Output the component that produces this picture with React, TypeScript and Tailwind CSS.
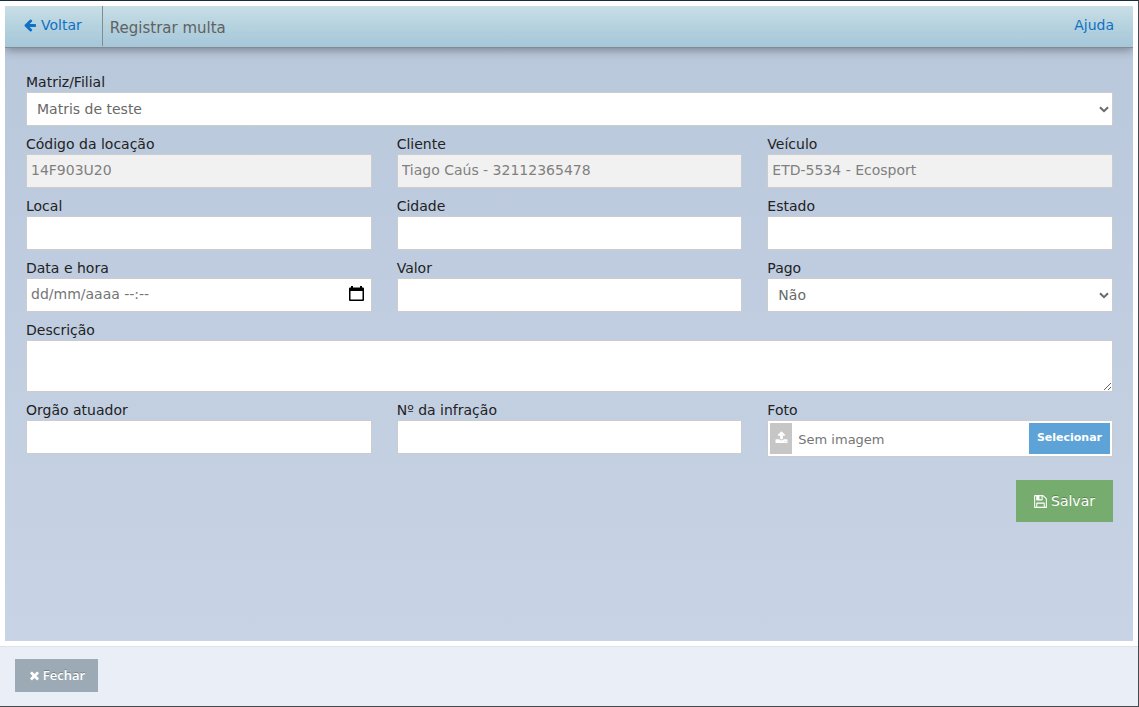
import { useRef, useState, type ReactNode } from 'react';

const control =
  'block h-[34px] w-full rounded-none border border-[#cccccc] bg-white px-1 pb-0.5 text-sm text-[#696969] placeholder:text-[#757575] outline-none focus:border-[#5ea3d8]';

function Icon({ path, className, viewBox = '0 0 1792 1792' }: { path: string; className: string; viewBox?: string }) {
  return (
    <svg viewBox={viewBox} fill="currentColor" aria-hidden="true" className={className}>
      <path d={path} />
    </svg>
  );
}

const arrowLeft =
  'M1664 896v128q0 53-32.5 90.5t-84.5 37.5h-704l293 294q38 36 38 90t-38 90l-75 76q-37 37-90 37-52 0-91-37l-651-652q-37-37-37-90 0-52 37-91l651-650q38-38 91-38 52 0 90 38l75 74q38 38 38 91t-38 91l-293 293h704q52 0 84.5 37.5t32.5 90.5z';
const times =
  'M1490 1322q0 40-28 68l-136 136q-28 28-68 28t-68-28l-294-294-294 294q-28 28-68 28t-68-28l-136-136q-28-28-28-68t28-68l294-294-294-294q-28-28-28-68t28-68l136-136q28-28 68-28t68 28l294 294 294-294q28-28 68-28t68 28l136 136q28 28 28 68t-28 68l-294 294 294 294q28 28 28 68z';
const upload =
  'M1344 1472q0-26-19-45t-45-19-45 19-19 45 19 45 45 19 45-19 19-45zm256 0q0-26-19-45t-45-19-45 19-19 45 19 45 45 19 45-19 19-45zm128-224v320q0 40-28 68t-68 28h-1472q-40 0-68-28t-28-68v-320q0-40 28-68t68-28h427q21 56 70.5 92t110.5 36h256q61 0 110.5-36t70.5-92h427q40 0 68 28t28 68zm-325-648q-17 40-59 40h-256v448q0 26-19 45t-45 19h-256q-26 0-45-19t-19-45v-448h-256q-42 0-59-40-17-39 14-69l448-448q18-19 45-19t45 19l448 448q31 30 14 69z';
const floppy =
  'M384 1536h768v-384h-768v384zm896 0h128v-896q0-14-10-38.5t-20-34.5l-281-281q-10-10-34-20t-39-10v416q0 40-28 68t-68 28h-576q-40 0-68-28t-28-68v-416h-128v1280h128v-416q0-40 28-68t68-28h832q40 0 68 28t28 68v416zm-384-928v-320q0-13-9.5-22.5t-22.5-9.5h-192q-13 0-22.5 9.5t-9.5 22.5v320q0 13 9.5 22.5t22.5 9.5h192q13 0 22.5-9.5t9.5-22.5zm640 32v928q0 40-28 68t-68 28h-1344q-40 0-68-28t-28-68v-1344q0-40 28-68t68-28h928q40 0 88 20t76 48l280 280q28 28 48 76t20 88z';

function Field({ id, label, wide, children }: { id: string; label: string; wide?: boolean; children: ReactNode }) {
  return (
    <div className={wide ? 'sm:col-span-3' : ''}>
      <label htmlFor={id} className="block text-sm leading-5 text-[#222222]">
        {label}
      </label>
      {children}
    </div>
  );
}

function TextField({ id, label, value }: { id: string; label: string; value?: string }) {
  return (
    <Field id={id} label={label}>
      {value ? (
        <input id={id} type="text" disabled defaultValue={value} className="block h-[34px] w-full border border-[#cccccc] bg-[#f1f1f1] px-1 pb-0.5 text-sm text-[#808080]" />
      ) : (
        <input id={id} type="text" className={control} />
      )}
    </Field>
  );
}

function SelectField({ id, label, options, wide }: { id: string; label: string; options: string[]; wide?: boolean }) {
  return (
    <Field id={id} label={label} wide={wide}>
      <div className="relative">
        <select id={id} className="block h-[34px] w-full appearance-none rounded-none border border-[#cccccc] bg-white px-2.5 text-sm text-[#696969] outline-none">
          {options.map((option) => (
            <option key={option}>{option}</option>
          ))}
        </select>
        <svg viewBox="0 0 10 7" fill="none" stroke="#696969" strokeWidth="2" aria-hidden="true" className="pointer-events-none absolute top-[14px] right-1 h-[7px] w-2.5">
          <path d="M1 1.2 5 5.2 9 1.2" />
        </svg>
      </div>
    </Field>
  );
}

function FileField() {
  const input = useRef<HTMLInputElement>(null);
  const [name, setName] = useState('Sem imagem');
  return (
    <Field id="foto" label="Foto">
      <div className="flex h-[37px] items-stretch border border-[#cccccc] bg-white p-0.5">
        <input ref={input} id="foto" type="file" accept="image/*" className="hidden" onChange={(e) => setName(e.target.files?.[0]?.name ?? 'Sem imagem')} />
        <span className="flex w-[22px] items-center justify-center bg-[#c6c6c6] pb-0.5 text-white">
          <Icon path={upload} className="size-[13px]" />
        </span>
        <span className="flex-1 self-center truncate px-1.5 pt-0.5 text-[13px] leading-5 text-[#757575]">{name}</span>
        <button type="button" onClick={() => input.current?.click()} className="w-[81px] bg-[#5ea3d8] text-[11px] font-bold text-white">
          Selecionar
        </button>
      </div>
    </Field>
  );
}

export default function App() {
  return (
    <div className="flex min-h-screen flex-col border-t border-r border-b border-t-[#1a2c3f] border-r-[#46484f] border-b-[#46484f] bg-white font-['Verdana','DejaVu_Sans',sans-serif]">
      <div className="flex flex-1 flex-col p-[5px]">
        <div className="flex flex-1 flex-col overflow-hidden">
          <header className="relative flex h-[42px] items-start justify-between border-b border-[#858a8d] bg-linear-to-b from-[#cadfe8] via-[#b4d2de] to-[#a6c7db] shadow-[0_2px_9px_rgba(0,0,0,0.36)]">
            <div className="flex">
              <a href="#voltar" className="flex h-10 items-center gap-1 border-r border-[#858a8d] pr-5 pb-0.5 pl-[18px] text-sm text-[#0f70c4]">
                <Icon path={arrowLeft} className="size-[14px]" />
                Voltar
              </a>
              <h1 className="pt-3 pl-[7px] text-[15px] leading-5 text-[#616161]">Registrar multa</h1>
            </div>
            <a href="#ajuda" className="pt-[9px] pr-[19px] text-sm leading-5 text-[#0f70c4]">
              Ajuda
            </a>
          </header>

          <main className="flex-1 bg-linear-to-b from-[#bac8dc] to-[#c8d4e5] pt-6 pr-5 pb-10 pl-[21px]">
            <form onSubmit={(e) => e.preventDefault()}>
              <div className="grid gap-x-[25px] gap-y-2 sm:grid-cols-3">
                <SelectField id="matriz" label="Matriz/Filial" options={['Matris de teste']} wide />
                <TextField id="codigo" label="Código da locação" value="14F903U20" />
                <TextField id="cliente" label="Cliente" value="Tiago Caús - 32112365478" />
                <TextField id="veiculo" label="Veículo" value="ETD-5534 - Ecosport" />
                <TextField id="local" label="Local" />
                <TextField id="cidade" label="Cidade" />
                <TextField id="estado" label="Estado" />
                <Field id="data" label="Data e hora">
                  <div className="relative">
                    <input id="data" type="text" placeholder="dd/mm/aaaa --:--" className={control} />
                    <button type="button" aria-label="Abrir calendário" className="absolute top-2 right-2 text-black">
                      <svg viewBox="0 0 15 16" fill="currentColor" aria-hidden="true" className="block h-4 w-[15px]">
                        <path d="M2 0h2v1.500h7V0h2v1.500h1a1 1 0 0 1 1 1V14a1 1 0 0 1-1 1H1a1 1 0 0 1-1-1V2.500a1 1 0 0 1 1-1h1zM1.500 5v8.500h12V5z" fillRule="evenodd" />
                      </svg>
                    </button>
                  </div>
                </Field>
                <TextField id="valor" label="Valor" />
                <SelectField id="pago" label="Pago" options={['Não', 'Sim']} />
                <Field id="descricao" label="Descrição" wide>
                  <textarea id="descricao" className="block h-[52px] w-full resize border border-[#cccccc] bg-white px-1 text-sm text-[#696969] outline-none" />
                </Field>
                <TextField id="orgao" label="Orgão atuador" />
                <TextField id="infracao" label="Nº da infração" />
                <FileField />
              </div>
              <div className="mt-[23px] flex justify-end">
                <button type="submit" className="flex h-[42px] w-[97px] items-center justify-center gap-1 bg-[#76ac6d] text-sm text-white [text-shadow:0_-1px_0_rgba(0,0,0,0.25)]">
                  <Icon path={floppy} viewBox="0 0 1536 1792" className="h-[15px] w-[13px]" />
                  Salvar
                </button>
              </div>
            </form>
          </main>
        </div>
      </div>

      <footer className="border-t border-[#dde1e6] bg-[#eaeef7] px-[15px] pt-3 pb-3.5">
        <button type="button" className="flex h-[33px] w-[83px] items-center justify-center gap-0.5 bg-[#9baab4] font-['Open_Sans',sans-serif] text-[13px] font-semibold text-white [text-shadow:0_-1px_0_rgba(0,0,0,0.25)]">
          <Icon path={times} className="size-[13px]" />
          Fechar
        </button>
      </footer>
    </div>
  );
}
